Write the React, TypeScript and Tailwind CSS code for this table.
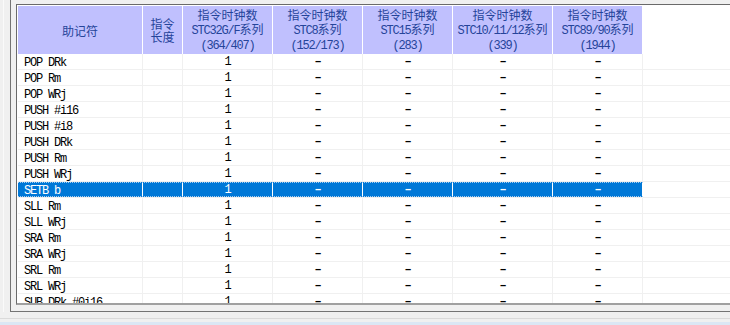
import React from "react";

const MONO = "font-[family-name:'Liberation_Mono',monospace] tracking-[-1.2px]";
const CJK = "font-[family-name:'Noto_Sans_CJK_SC',sans-serif] tracking-normal";

function Txt({ s }: { s: string }) {
  const parts = s.split(/([\u4e00-\u9fff]+)/).filter((p) => p.length > 0);
  return (
    <span className="whitespace-pre">
      {parts.map((p, i) =>
        /[\u4e00-\u9fff]/.test(p) ? (
          <span key={i} className={CJK}>
            {p}
          </span>
        ) : (
          <span key={i} className={MONO}>
            {p}
          </span>
        )
      )}
    </span>
  );
}

const headers: { w: string; lines: string[]; lead: string }[] = [
  { w: "w-[125px]", lines: ["助记符"], lead: "leading-[13px] pt-[2px]" },
  { w: "w-[40px]", lines: ["指令", "长度"], lead: "leading-[12px] pt-px" },
  { w: "w-[90px]", lines: ["指令时钟数", "STC32G/F系列", "(364/407)"], lead: "leading-[13px] pt-px" },
  { w: "w-[90px]", lines: ["指令时钟数", "STC8系列", "(152/173)"], lead: "leading-[13px] pt-px" },
  { w: "w-[90px]", lines: ["指令时钟数", "STC15系列", "(283)"], lead: "leading-[13px] pt-px" },
  { w: "w-[100px]", lines: ["指令时钟数", "STC10/11/12系列", "(339)"], lead: "leading-[13px] pt-px" },
  { w: "w-[90px]", lines: ["指令时钟数", "STC89/90系列", "(1944)"], lead: "leading-[13px] pt-px" },
];

const mnemonics = [
  "POP DRk",
  "POP Rm",
  "POP WRj",
  "PUSH #i16",
  "PUSH #i8",
  "PUSH DRk",
  "PUSH Rm",
  "PUSH WRj",
  "SETB b",
  "SLL Rm",
  "SLL WRj",
  "SRA Rm",
  "SRA WRj",
  "SRL Rm",
  "SRL WRj",
  "SUB DRk,#0i16",
];

const SELECTED = 8;

function Row({ name, sel }: { name: string; sel: boolean }) {
  const base = sel
    ? "h-full flex items-center border-r border-b border-r-white border-b-[#f0f0f0] bg-[#0078d7] text-white pt-px"
    : "h-full flex items-center border-r border-b border-[#f0f0f0] text-black pt-px";
  const dash = sel ? "text-white font-bold" : "text-black font-bold";
  return (
    <div className="relative flex h-[16px] shrink-0 text-[12px] leading-[12px]">
      <div className={`${base} w-[125px] pl-[6px]`}>
        <Txt s={name} />
      </div>
      <div className={`${base} w-[40px]`} />
      <div className={`${base} w-[90px] justify-center`}>
        <span className={MONO}>1</span>
      </div>
      <div className={`${base} w-[90px] justify-center`}>
        <span className={`${MONO} ${dash}`}>–</span>
      </div>
      <div className={`${base} w-[90px] justify-center`}>
        <span className={`${MONO} ${dash}`}>–</span>
      </div>
      <div className={`${base} w-[100px] justify-center`}>
        <span className={`${MONO} ${dash}`}>–</span>
      </div>
      <div className={`${base} w-[90px] justify-center`}>
        <span className={`${MONO} ${dash}`}>–</span>
      </div>
      <div className="h-full flex-1 border-b border-[#f0f0f0]" />
      {sel && (
        <div className="absolute left-0 top-0 h-[15px] w-[625px] border-y border-dotted border-[#a9cff0]" />
      )}
    </div>
  );
}

export default function App() {
  return (
    <div className="flex h-[325px] w-[730px] flex-col overflow-hidden bg-[#f0f0f0]">
      <div className="flex h-[312px] shrink-0">
        <div className="h-full w-[10px] shrink-0 pl-[3px]">
          <div className="h-full border-l border-[#fafafa]" />
        </div>
        <div className="min-w-0 flex-1 border-b border-l border-[#747474] pb-[6px] pl-[5px] pt-[4px]">
          <div className="flex h-full flex-col border-b-2 border-l border-t border-b-[#a0a0a0] border-l-[#6a6a6a] border-t-[#6a6a6a]">
            <div className="flex min-h-0 flex-1 flex-col overflow-hidden border-l border-t border-white bg-white">
              <div className="flex h-[48px] shrink-0 text-[12px] text-[#25449a]">
                {headers.map((h, i) => (
                  <div
                    key={i}
                    className={`${h.w} ${h.lead} flex h-full flex-col items-center justify-center overflow-hidden whitespace-nowrap border-r border-white bg-[#c0c0fe]`}
                  >
                    {h.lines.map((l, j) => (
                      <div key={j}>
                        <Txt s={l} />
                      </div>
                    ))}
                  </div>
                ))}
                <div className="h-full flex-1 bg-white" />
              </div>
              {mnemonics.map((m, i) => (
                <Row key={i} name={m} sel={i === SELECTED} />
              ))}
            </div>
          </div>
        </div>
      </div>
      <div className="h-[6px] shrink-0" />
      <div className="h-px shrink-0 bg-[#dadada]" />
      <div className="h-[3px] shrink-0" />
      <div className="flex-1 bg-[#dbe7f4]" />
    </div>
  );
}
